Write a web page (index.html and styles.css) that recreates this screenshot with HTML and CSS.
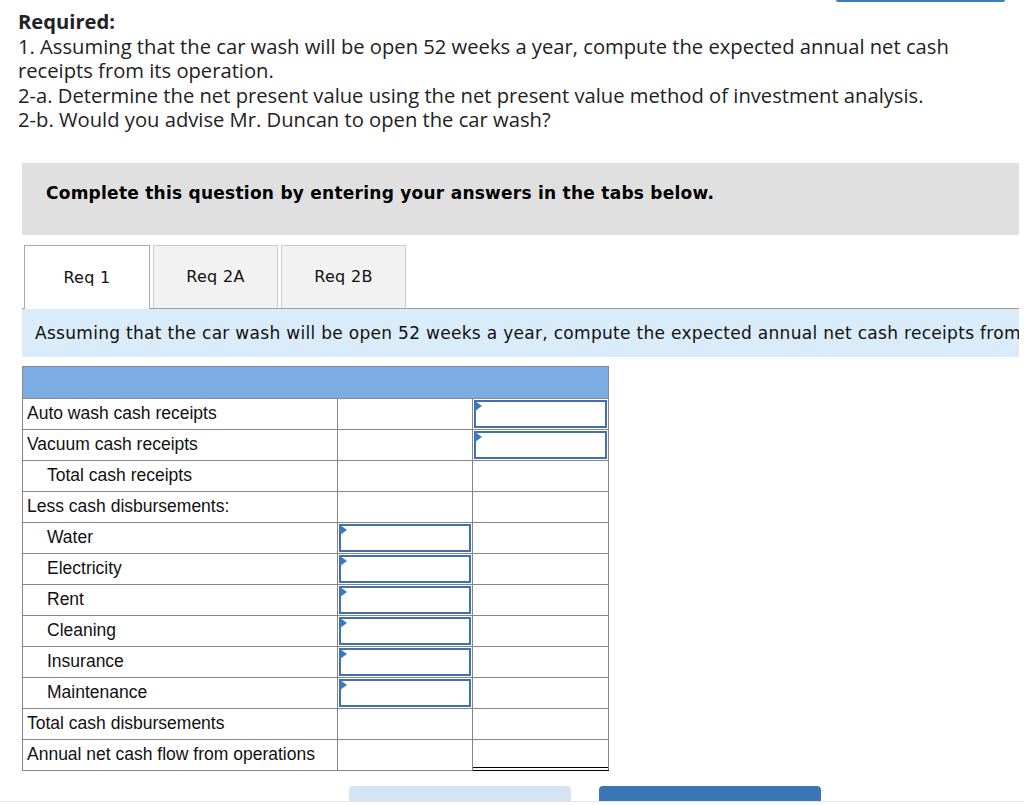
FILE: index.html
```
<!DOCTYPE html>
<html>
<head>
<meta charset="utf-8">
<link rel="stylesheet" href="styles.css">
</head>
<body>
<div class="topbar"><div class="topbtn"></div></div>
<div class="required">
  <div class="req-title">Required:</div>
  <div>1. Assuming that the car wash will be open 52 weeks a year, compute the expected annual net cash receipts from its operation.</div>
  <div>2-a. Determine the net present value using the net present value method of investment analysis.</div>
  <div>2-b. Would you advise Mr. Duncan to open the car wash?</div>
</div>
<div class="work">
  <div class="notice">Complete this question by entering your answers in the tabs below.</div>
  <div class="tabs">
    <div class="tab active">Req 1</div>
    <div class="tab">Req 2A</div>
    <div class="tab">Req 2B</div>
  </div>
  <div class="instruction">Assuming that the car wash will be open 52 weeks a year, compute the expected annual net cash receipts from its operation.</div>
  <table class="grid">
    <colgroup><col class="c1"><col class="c2"><col class="c3"></colgroup>
    <tr class="head"><td colspan="3"></td></tr>
    <tr><td class="lbl">Auto wash cash receipts</td><td></td><td class="inp"><div class="box"></div><span class="flag"></span></td></tr>
    <tr><td class="lbl">Vacuum cash receipts</td><td></td><td class="inp"><div class="box"></div><span class="flag"></span></td></tr>
    <tr><td class="lbl ind">Total cash receipts</td><td></td><td class="sumtop"></td></tr>
    <tr><td class="lbl">Less cash disbursements:</td><td></td><td></td></tr>
    <tr><td class="lbl ind">Water</td><td class="inp"><div class="box"></div><span class="flag"></span></td><td></td></tr>
    <tr><td class="lbl ind">Electricity</td><td class="inp"><div class="box"></div><span class="flag"></span></td><td></td></tr>
    <tr><td class="lbl ind">Rent</td><td class="inp"><div class="box"></div><span class="flag"></span></td><td></td></tr>
    <tr><td class="lbl ind">Cleaning</td><td class="inp"><div class="box"></div><span class="flag"></span></td><td></td></tr>
    <tr><td class="lbl ind">Insurance</td><td class="inp"><div class="box"></div><span class="flag"></span></td><td></td></tr>
    <tr><td class="lbl ind">Maintenance</td><td class="inp"><div class="box"></div><span class="flag"></span></td><td></td></tr>
    <tr><td class="lbl">Total cash disbursements</td><td class="sumtop"></td><td></td></tr>
    <tr><td class="lbl">Annual net cash flow from operations</td><td></td><td class="sumtop dbl"></td></tr>
  </table>
  <div class="footer">
    <div class="fbtn prev"></div>
    <div class="fbtn next"></div>
  </div>
</div>
<div class="rule"></div>
</body>
</html>
```
FILE: styles.css
```
html, body {
  margin: 0;
  padding: 0;
  background: #fff;
}
body {
  width: 1024px;
  overflow: hidden;
}
.topbar {
  height: 2px;
  padding-left: 836px;
}
.topbtn {
  width: 169px;
  height: 2px;
  background: #3f7bbf;
  border-radius: 0 0 2px 2px;
}
.required {
  margin-top: 7px;
  padding-left: 18px;
  width: 960px;
  font-family: "Open Sans", Lato, sans-serif;
  font-size: 20.2px;
  line-height: 24.5px;
  color: #222;
}
.req-title {
  font-weight: bold;
}
.work {
  margin-left: 22px;
  width: 997px;
}
.notice {
  margin-top: 31px;
  height: 52px;
  padding: 20px 0 0 24px;
  background: #e0e0e0;
  font-family: "DejaVu Sans", Verdana, sans-serif;
  font-weight: bold;
  font-size: 17px;
  letter-spacing: 0.25px;
  color: #000;
}
.tabs {
  margin-top: 10px;
  display: flex;
  gap: 3px;
  padding-left: 2px;
  border-bottom: 1px solid #9e9e9e;
  height: 63px;
}
.tab {
  width: 123px;
  height: 62px;
  border: 1px solid #cdcdcd;
  border-bottom: none;
  background: #f2f2f2;
  display: flex;
  align-items: center;
  justify-content: center;
  font-family: "DejaVu Sans", Verdana, sans-serif;
  font-size: 16px;
  letter-spacing: 0.3px;
  color: #111;
}
.tab.active {
  width: 124px;
  height: 63px;
  background: #fff;
  border-color: #aaa;
  margin-bottom: -1px;
}
.instruction {
  height: 48px;
  line-height: 49px;
  padding-left: 13px;
  background: #daecf9;
  font-family: "DejaVu Sans", Verdana, sans-serif;
  font-size: 17px;
  letter-spacing: 0.3px;
  color: #111;
  white-space: nowrap;
  overflow: hidden;
}
.grid {
  margin-top: 9px;
  border-collapse: collapse;
  table-layout: fixed;
  width: 586px;
  font-family: "Liberation Sans", Arial, sans-serif;
  font-size: 17.5px;
  color: #111;
}
.c1 { width: 315px; }
.c2 { width: 135px; }
.c3 { width: 136px; }
.grid td {
  border: 1px solid #858585;
  height: 30px;
  padding: 0;
  position: relative;
}
.grid tr.head td {
  background: #7badE4;
  height: 31px;
  border-color: #8a8a8a;
}
.grid td.lbl {
  padding-left: 4px;
  white-space: nowrap;
}
.grid td.ind {
  padding-left: 24px;
}
.grid td.inp {
  padding: 1px;
  height: 28px;
}
.box {
  height: 24px;
  border: 2px solid #4070ad;
}
.flag {
  position: absolute;
  left: 2px;
  top: 2px;
  width: 0;
  height: 0;
  border-top: 5px solid transparent;
  border-bottom: 5px solid transparent;
  border-left: 7px solid #3b78c2;
}
.grid td.sumtop {
  border-top: 1px solid #000;
}
.grid td.dbl {
  border-bottom: 1px solid #000;
  background: linear-gradient(#000, #000) left bottom 2px / 100% 1px no-repeat;
}
.footer {
  margin-top: 15px;
  height: 15px;
  overflow: hidden;
  display: flex;
  padding-left: 327px;
  gap: 28px;
}
.fbtn {
  width: 222px;
  height: 40px;
  border-radius: 4px 4px 0 0;
}
.fbtn.prev { background: #d6e3f2; }
.fbtn.next { background: #3a75b8; }
.rule {
  height: 1px;
  background: #e6e6e6;
}
```
